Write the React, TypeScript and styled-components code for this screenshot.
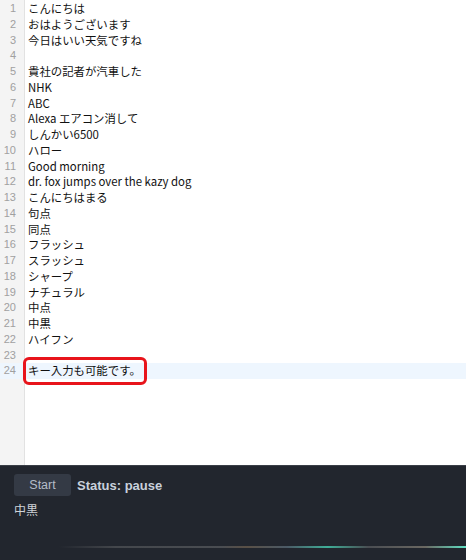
import React from 'react';
import styled, { createGlobalStyle } from 'styled-components';

const GlobalStyle = createGlobalStyle`
  html, body { margin: 0; padding: 0; }
  body { width: 466px; height: 560px; overflow: hidden; background: #fff; }
`;

const Page = styled.div`
  width: 466px;
  height: 560px;
  display: flex;
  flex-direction: column;
`;

const Editor = styled.div`
  position: relative;
  height: 465px;
  display: flex;
  background: #fff;
  font-family: "Noto Sans CJK JP", "Liberation Mono", monospace;
  font-size: 11.4px;
  color: #111;
`;

const Gutter = styled.div`
  width: 24px;
  flex: none;
  background: #f4f4f4;
  border-right: 1px solid #e2e2e2;
`;

const Lines = styled.div`
  flex: 1;
  padding-top: 1px;
`;

const Row = styled.div<{ $active?: boolean }>`
  height: 15.75px;
  line-height: 15.75px;
  white-space: pre;
  background: ${p => (p.$active ? '#eef6fe' : 'transparent')};
`;

const Num = styled(Row)`
  text-align: right;
  padding-right: 8px;
  color: #a0a0a0;
  font-family: "Liberation Sans", sans-serif;
  font-size: 11px;
`;

const Text = styled(Row)`
  padding-left: 3px;
`;

const Marker = styled.div`
  position: absolute;
  left: 23px;
  top: 357px;
  width: 124px;
  height: 28px;
  box-sizing: border-box;
  border: 3px solid #e8141b;
  border-radius: 6px;
`;

const Panel = styled.div`
  flex: 1;
  background: #22262e;
  border-top: 1px solid #3a3f47;
  padding: 8px 14px 0;
  display: flex;
  flex-direction: column;
  font-family: "Liberation Sans", "Noto Sans CJK JP", sans-serif;
`;

const Controls = styled.div`
  display: flex;
  align-items: center;
  gap: 6px;
`;

const Button = styled.button`
  width: 57px;
  height: 22px;
  border: none;
  border-radius: 3px;
  background: #343a45;
  color: #b4bcc7;
  font-family: "Liberation Sans", sans-serif;
  font-size: 12.5px;
  padding: 0;
`;

const Status = styled.span`
  color: #c9d1dc;
  font-weight: bold;
  font-size: 13px;
`;

const Result = styled.div`
  margin-top: 5px;
  color: #cfd3d8;
  font-size: 12px;
  font-family: "Noto Sans CJK JP", sans-serif;
`;

const Meter = styled.div`
  margin: auto -14px 12px 45px;
  height: 2px;
  background: linear-gradient(90deg, rgba(74,77,82,0) 0%, #44474c 14%, #4a4d52 40%, #5a5046 46%, #4c5a66 56%, #3fae98 66%, #4a4d52 76%, #6b6862 90%, #5fe0c4 100%);
`;

const lines = [
  'こんにちは',
  'おはようございます',
  '今日はいい天気ですね',
  '',
  '貴社の記者が汽車した',
  'NHK',
  'ABC',
  'Alexa エアコン消して',
  'しんかい6500',
  'ハロー',
  'Good morning',
  'dr. fox jumps over the kazy dog',
  'こんにちはまる',
  '句点',
  '同点',
  'フラッシュ',
  'スラッシュ',
  'シャープ',
  'ナチュラル',
  '中点',
  '中黒',
  'ハイフン',
  '',
  'キー入力も可能です。',
];

export default function App() {
  const active = lines.length - 1;
  return (
    <Page>
      <GlobalStyle />
      <Editor>
        <Gutter>
          <Lines>
            {lines.map((_, i) => (
              <Num key={i} $active={i === active}>{i + 1}</Num>
            ))}
          </Lines>
        </Gutter>
        <Lines>
          {lines.map((l, i) => (
            <Text key={i} $active={i === active}>{l}</Text>
          ))}
        </Lines>
        <Marker />
      </Editor>
      <Panel>
        <Controls>
          <Button>Start</Button>
          <Status>Status: pause</Status>
        </Controls>
        <Result>中黒</Result>
        <Meter />
      </Panel>
    </Page>
  );
}
